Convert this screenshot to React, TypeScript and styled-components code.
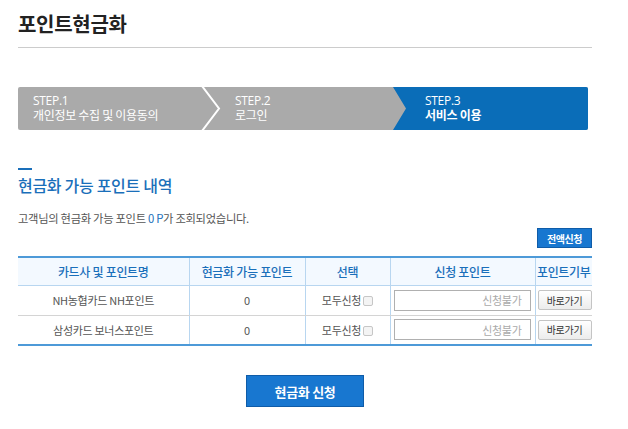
import React from "react";
import styled, { createGlobalStyle } from "styled-components";

const Global = createGlobalStyle`
  html, body { margin: 0; padding: 0; background: #fff; }
  body { font-family: "Noto Sans CJK KR", "Noto Sans", sans-serif; color: #333; }
  * { box-sizing: border-box; }
`;

const Page = styled.div`
  width: 628px;
  padding: 0 36px 0 18px;
`;

const Title = styled.h1`
  margin: 0;
  padding-top: 11px;
  height: 48px;
  font-size: 20px;
  font-weight: 700;
  color: #222;
  letter-spacing: -0.3px;
  border-bottom: 1px solid #ccc;
  line-height: 26px;
`;

const Steps = styled.div`
  margin-top: 39px;
  margin-right: 4px;
  display: flex;
  height: 43px;
  background: #aaaaaa;
  border-radius: 2px;
  overflow: hidden;
`;

const Step = styled.div<{ $w?: number; $active?: boolean; $pad: number }>`
  position: relative;
  ${(p) => (p.$w ? `width: ${p.$w}px;` : "flex: 1;")}
  padding-left: ${(p) => p.$pad}px;
  display: flex;
  flex-direction: column;
  justify-content: center;
  gap: 1px;
  color: #fff;
  font-size: 12px;
  background: ${(p) => (p.$active ? "#0a6db8" : "transparent")};
  ${(p) => (p.$active ? "clip-path: polygon(0 0, 100% 0, 100% 100%, 0 100%, 13px 50%);" : "")}
`;

const StepLabel = styled.span`
  display: block;
  height: 12px;
  line-height: 12px;
  font-family: "Open Sans", "Noto Sans CJK KR", sans-serif;
  font-size: 12px;
  letter-spacing: -0.3px;
`;

const StepName = styled.span<{ $bold?: boolean }>`
  display: block;
  height: 14px;
  line-height: 14px;
  font-weight: ${(p) => (p.$bold ? 700 : 400)};
  letter-spacing: -0.3px;
`;

const Chevron = styled.svg`
  position: absolute;
  top: 0;
  left: -1px;
  overflow: visible;
`;

const SectionHead = styled.h2`
  margin: 38px 0 0;
  position: relative;
  font-size: 16px;
  font-weight: 500;
  color: #1a6fba;
  line-height: 22px;
  padding-top: 6px;
  letter-spacing: -0.3px;
  &::before {
    content: "";
    position: absolute;
    top: 0;
    left: 0;
    width: 14px;
    height: 2px;
    background: #1a6fba;
  }
`;

const Info = styled.p`
  margin: 14px 0 0;
  font-size: 11.3px;
  color: #555;
  letter-spacing: -0.3px;
  line-height: 16px;
`;

const Blue = styled.span`
  color: #1a6fba;
`;

const TopBar = styled.div`
  display: flex;
  justify-content: flex-end;
  margin-top: 2px;
`;

const SmallBlueBtn = styled.button`
  width: 55px;
  height: 20px;
  padding: 0;
  border: 1px solid #0f5ca8;
  background: #1877d0;
  color: #fff;
  font-family: "Noto Sans CJK KR", sans-serif;
  font-size: 10px;
  font-weight: 700;
  letter-spacing: -0.5px;
`;

const Table = styled.table`
  margin-top: 8px;
  width: 574px;
  border-collapse: collapse;
  table-layout: fixed;
  border-top: 2px solid #4d9ad8;
  border-bottom: 2px solid #4d9ad8;
`;

const Th = styled.th<{ $w: number }>`
  width: ${(p) => p.$w}px;
  height: 28px;
  background: #f3f9ff;
  color: #1a6fba;
  font-size: 12px;
  font-weight: 500;
  letter-spacing: -0.3px;
  border-bottom: 1px solid #b8d6f0;
  border-left: 1px solid #b8d6f0;
  &:first-child { border-left: none; }
  padding: 0;
`;

const Td = styled.td`
  height: 30px;
  text-align: center;
  font-size: 11px;
  color: #555;
  letter-spacing: -0.3px;
  border-left: 1px solid #b8d6f0;
  border-bottom: 1px solid #d4d4d4;
  &:first-child { border-left: none; }
  padding: 0 3px;
`;

const Check = styled.span`
  display: inline-block;
  width: 10px;
  height: 10px;
  margin-left: 2px;
  vertical-align: -1px;
  border: 1px solid #c6c6c6;
  border-radius: 2px;
  background: #f4f4f4;
`;

const PointInput = styled.input`
  display: block;
  width: 137px;
  height: 21px;
  border: 1px solid #b0b0b0;
  background: #fff;
  text-align: right;
  padding: 0 8px;
  font-family: "Noto Sans CJK KR", sans-serif;
  font-size: 11px;
  letter-spacing: -0.3px;
  &::placeholder { color: #aaa; }
`;

const GrayBtn = styled.button`
  display: block;
  width: 54px;
  height: 20px;
  padding: 0;
  margin-left: -1px;
  border: 1px solid #c4c4c4;
  border-radius: 2px;
  background: linear-gradient(#ffffff, #ececec);
  font-family: "Noto Sans CJK KR", sans-serif;
  font-size: 10px;
  color: #333;
  letter-spacing: -0.3px;
`;

const Footer = styled.div`
  display: flex;
  justify-content: center;
  margin-top: 29px;
`;

const BigBtn = styled.button`
  width: 118px;
  height: 32px;
  border: 1px solid #0f5ca8;
  background: #1877d0;
  color: #fff;
  font-family: "Noto Sans CJK KR", sans-serif;
  font-size: 13px;
  font-weight: 700;
  letter-spacing: -0.3px;
`;

const rows = [
  { name: "NH농협카드 NH포인트", pt: "0" },
  { name: "삼성카드 보너스포인트", pt: "0" },
];

export default function App() {
  return (
    <>
      <Global />
      <Page>
        <Title>포인트현금화</Title>
        <Steps>
          <Step $w={185} $pad={15}>
            <StepLabel>STEP.1</StepLabel>
            <StepName>개인정보 수집 및 이용동의</StepName>
          </Step>
          <Step $w={190} $pad={32}>
            <Chevron width="20" height="43">
              <polyline points="0,-1 17,21.5 0,44" fill="none" stroke="#fff" strokeWidth="2" />
            </Chevron>
            <StepLabel>STEP.2</StepLabel>
            <StepName>로그인</StepName>
          </Step>
          <Step $active $pad={32}>
            <StepLabel>STEP.3</StepLabel>
            <StepName $bold>서비스 이용</StepName>
          </Step>
        </Steps>
        <SectionHead>현금화 가능 포인트 내역</SectionHead>
        <Info>
          고객님의 현금화 가능 포인트 <Blue>0 P</Blue>가 조회되었습니다.
        </Info>
        <TopBar>
          <SmallBlueBtn>전액신청</SmallBlueBtn>
        </TopBar>
        <Table>
          <thead>
            <tr>
              <Th $w={171}>카드사 및 포인트명</Th>
              <Th $w={116}>현금화 가능 포인트</Th>
              <Th $w={85}>선택</Th>
              <Th $w={145}>신청 포인트</Th>
              <Th $w={57}>포인트기부</Th>
            </tr>
          </thead>
          <tbody>
            {rows.map((r) => (
              <tr key={r.name}>
                <Td>{r.name}</Td>
                <Td>{r.pt}</Td>
                <Td>
                  모두신청<Check />
                </Td>
                <Td>
                  <PointInput placeholder="신청불가" disabled />
                </Td>
                <Td>
                  <GrayBtn>바로가기</GrayBtn>
                </Td>
              </tr>
            ))}
          </tbody>
        </Table>
        <Footer>
          <BigBtn>현금화 신청</BigBtn>
        </Footer>
      </Page>
    </>
  );
}
